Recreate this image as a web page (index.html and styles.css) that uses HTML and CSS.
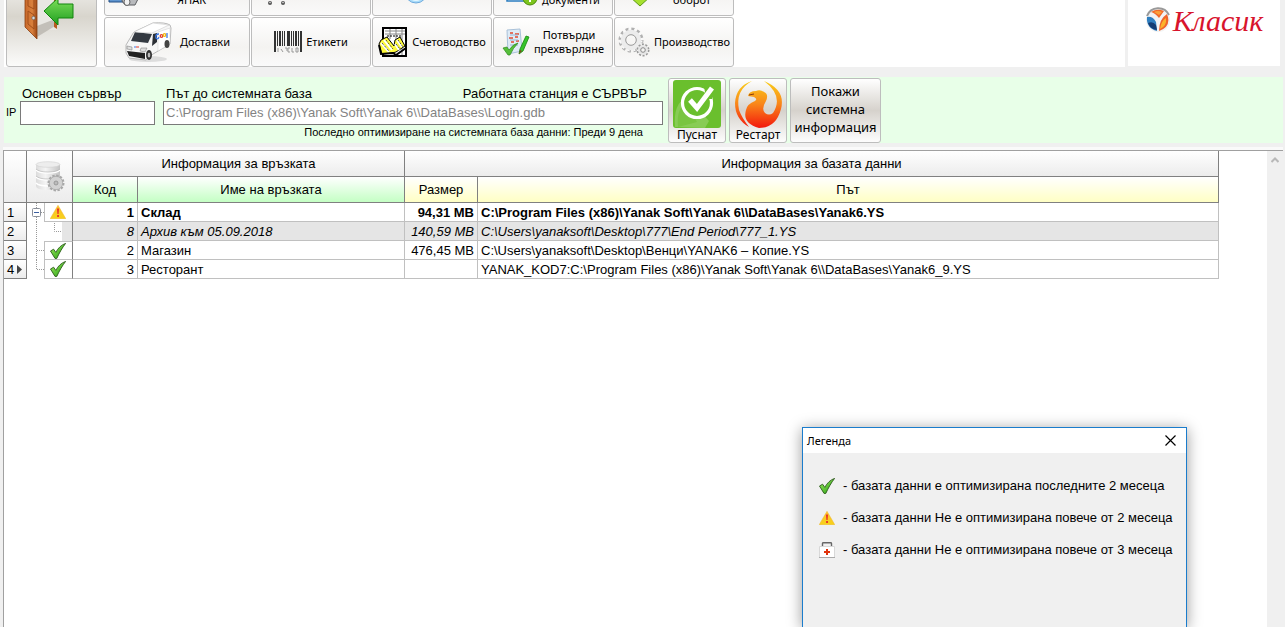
FILE: index.html
```html
<!DOCTYPE html>
<html lang="bg">
<head>
<meta charset="utf-8">
<title>Класик</title>
<link rel="stylesheet" href="styles.css">
</head>
<body>
<svg class="defs" width="0" height="0" aria-hidden="true">
  <defs>
    <linearGradient id="gGreen" x1="0" y1="0" x2="1" y2="1"><stop offset="0" stop-color="#a4f060"/><stop offset="1" stop-color="#1f9a10"/></linearGradient>
    <linearGradient id="gArrow" x1="0" y1="0" x2="0" y2="1"><stop offset="0" stop-color="#7ddf5a"/><stop offset="1" stop-color="#1f9e1f"/></linearGradient>
    <linearGradient id="gWood" x1="0" y1="0" x2="1" y2="0"><stop offset="0" stop-color="#c8682a"/><stop offset=".6" stop-color="#d9803c"/><stop offset="1" stop-color="#9c4614"/></linearGradient>
    <linearGradient id="gFire" x1="0" y1="0" x2="0" y2="48" gradientUnits="userSpaceOnUse"><stop offset="0" stop-color="#f9d21a"/><stop offset=".5" stop-color="#f9861a"/><stop offset="1" stop-color="#f3170c"/></linearGradient>
    <linearGradient id="gWarn" x1="0" y1="0" x2="0" y2="1"><stop offset="0" stop-color="#ffbf2a"/><stop offset="1" stop-color="#f6d21a"/></linearGradient>
    <linearGradient id="gDisk" x1="0" y1="0" x2="1" y2="0"><stop offset="0" stop-color="#dcdcdc"/><stop offset=".4" stop-color="#f4f4f4"/><stop offset="1" stop-color="#c4c4c4"/></linearGradient>
    <symbol id="check" viewBox="0 0 16 16"><path d="M.5 8 3.600 6.200l2.200 3.200C8 5 11.500 1.800 15.600.4 12.200 4.800 9.500 9.500 6.800 15.400H5Z" fill="url(#gGreen)" stroke="#2c5a1c" stroke-width=".9" stroke-linejoin="round"/></symbol>
    <symbol id="warn" viewBox="0 0 16 14"><path d="M8 .3 15.800 13.700H.2Z" fill="url(#gWarn)" stroke="#eeb42a" stroke-width=".5" stroke-linejoin="round"/><path d="M6.900 3.500h2.200l-.5 5.500H7.400Z" fill="#e8382a"/><rect x="7.100" y="10" width="1.900" height="2" fill="#e8382a"/></symbol>
  </defs>
</svg>

<header class="top">
  <nav class="toolbar">
    <button class="tool exit" aria-label="Изход">
      <svg width="54" height="62" viewBox="12 0 54 62"><path d="M16 4h31v42H16z" fill="#e9e7e3"/><path d="M27 53V42l18-7v7Z" fill="#b9b5ae" opacity=".8"/><path d="M44 4h3v41l-3-2z" fill="#b85a20"/><path d="M15 0 27 6v49L15 43Z" fill="url(#gWood)" stroke="#8a3f10" stroke-width=".8"/><path d="M18 8l6 3v14l-6-3zM18 27l6 4v14l-6-5z" fill="none" stroke="#a24e1a"/><circle cx="23.500" cy="34" r="1.700" fill="#d9d9d9" stroke="#555" stroke-width=".6"/><path d="M34 27 48 14v6h15v14H48v7Z" fill="url(#gArrow)" stroke="#12850f"/></svg>
    </button>
    <div class="tools">
      <button class="tool upper print"><svg width="32" height="22" viewBox="0 0 32 22"><path d="M2 8h18v9H2z" fill="#5f95cf" stroke="#234f86"/><path d="M4 13h14v2H4z" fill="#bcd7f0"/><path d="M16 10h12l3 4-3 6H18l-3-4z" fill="#b8babd" stroke="#5b5d60"/><ellipse cx="20" cy="17" rx="3" ry="3.500" fill="#f2f2f2" stroke="#666"/></svg><span>ЯНАК</span></button>
      <button class="tool upper cart" aria-label="Продажби"><svg width="26" height="22" viewBox="0 0 26 22"><path d="M1 1h4l3 11h13" fill="none" stroke="#555" stroke-width="2"/><circle cx="6" cy="18" r="2" fill="#555"/><circle cx="19" cy="18" r="2" fill="#555"/><circle cx="6" cy="17.500" r=".8" fill="#ddd"/><circle cx="19" cy="17.500" r=".8" fill="#ddd"/></svg></button>
      <button class="tool upper globe" aria-label="Справки"><svg width="24" height="24" viewBox="0 0 24 24"><circle cx="12" cy="12" r="11" fill="#a9dcfa" stroke="#6da9dc"/><ellipse cx="12" cy="17" rx="6" ry="4" fill="#e6f8ff"/></svg></button>
      <button class="tool upper"><svg width="32" height="28" viewBox="0 0 32 28"><path d="M1 4h26v18H1z" fill="#fff" stroke="#2a7cc0" stroke-width="1.500"/><circle cx="24" cy="19" r="7" fill="#7cc41c" stroke="#4a8a0c"/><path d="M24 15v8M20 19h8" stroke="#fff" stroke-width="2"/></svg><span>документи</span></button>
      <button class="tool upper turnover"><svg width="26" height="26" viewBox="0 0 26 26"><path d="M7 4h12v11h5L13 25 2 15h5z" fill="#a6e02e" stroke="#5c9a12"/></svg><span>оборот</span></button>

      <button class="tool"><svg width="48" height="42" viewBox="0 0 48 42"><ellipse cx="24" cy="38" rx="19" ry="3" fill="#ddd"/><path d="M2 24 8 14q1-3 4-4L29 2q12-1 17 2l1 3-1 16-17 10-7 6-17-2-3-5Z" fill="#f6f6f6" stroke="#a9a9a9" stroke-width=".8"/><path d="M7 20 11 11l17 2-4 9Z" fill="#343a42"/><path d="M29 13l4-1v9l-5 4z" fill="#2c3036"/><path d="M34 11 46 7v16l-12 7z" fill="#fff" stroke="#ccc" stroke-width=".5"/><path d="M10 11 29 2l16 2-17 8Z" fill="#fff" stroke="#c5c5c5" stroke-width=".5"/><path d="M3 30l18 2v6L5 35z" fill="#222"/><path d="M3 25l5 1v3l-5-1zM17 27l6 0-2 4-5-1z" fill="#ddd" stroke="#777" stroke-width=".5"/><ellipse cx="25" cy="34" rx="3" ry="5" fill="#333"/><ellipse cx="25" cy="34" rx="1.300" ry="2.500" fill="#bbb"/><ellipse cx="43" cy="23" rx="2.500" ry="4" fill="#444"/><g fill="none" stroke-width="1.300"><path d="M35 13q-4 0-3 4 2 2 3-1" stroke="#3b78e7"/><circle cx="37.500" cy="15" r="1.300" stroke="#e0392c"/><circle cx="40.500" cy="14" r="1.300" stroke="#f3b90f"/><path d="M43 12v5" stroke="#3b78e7"/></g><path d="M10 26h2" stroke="#3b78e7"/><path d="M12 26h3" stroke="#e0392c"/></svg><span>Доставки</span></button>
      <button class="tool"><svg width="28" height="22" viewBox="0 0 28 22" fill="#333"><path d="M0 0h2v21H0zM3 0h1v15H3zM5 0h2v15H5zM8 0h1v15H8zM10 0h1v15h-1zM13 0h3v15h-3zM17 0h1v15h-1zM19 0h1v15h-1zM21 0h2v15h-2zM24 0h1v15h-1zM26 0h2v21h-2z"/><path d="M4 17v4M7 18l2 3M11 17h2v3M16 17h-2v4h2M18 17v4h2M22 17h2v4h-2z" fill="none" stroke="#999"/></svg><span>Етикети</span></button>
      <button class="tool"><svg width="30" height="30" viewBox="0 0 30 30"><path d="M5 1h23v28H5z" fill="#fff" stroke="#000" stroke-width="2"/><path d="M7 4h20M7 7h20M12 2v10M18 2v10M24 2v26" stroke="#888"/><path d="M9 9h14" stroke="#000" stroke-dasharray="2 1"/><path d="M1 17 3 13 9 10l7 9 1-6 5-3 5 9-9 6-4 1-10 1z" fill="#fffb3a" stroke="#000"/><path d="M3 16l8 9M6 13l8 10M19 13l5 7M17 17l4 6" stroke="#fff" stroke-width="2"/><path d="M4 16l7 8M8 13l7 9M20 13l5 7M18 17l4 5" stroke="#222" stroke-dasharray="1 1"/><path d="M1 18l2 9 12-1 3 2 10-7" fill="none" stroke="#000" stroke-width="2"/></svg><span>Счетоводство</span></button>
      <button class="tool"><svg width="28" height="28" viewBox="0 0 28 28"><path d="M5 2 18 1l2 22-14 3z" fill="#dfebf6" stroke="#a9c1d9"/><path d="M8 5l3 0M13 6h4M7 10h4M13 9h3M9 14h3M14 13h3" stroke="#e24a30" stroke-width="1.500"/><path d="M8 7h8M8 12h8M8 17h8" stroke="#94b4d4"/><path d="M1 20l4-1 2 3q4-6 9-7-5 5-8 12H6z" fill="#56bf3a" stroke="#2c8a1c" stroke-width=".7"/><path d="M17 26l1-5 6-13 3 1-6 14z" fill="#35c42a" stroke="#16860f" stroke-width=".8"/><path d="M17 26l1-4 2 1z" fill="#7a4a1a"/></svg><span>Потвърди<br>прехвърляне</span></button>
      <button class="tool"><svg width="32" height="30" viewBox="0 0 32 30" fill="none"><circle cx="13" cy="13" r="11" stroke="#b0b0b0" stroke-width="3" stroke-dasharray="3.100 2.660"/><circle cx="13" cy="13" r="10.500" stroke="#fafafa" stroke-width="2" stroke-dasharray="2.100 3.660" stroke-dashoffset="-.5"/><circle cx="13" cy="13" r="7.700" stroke="#ececec" stroke-width="5"/><circle cx="13" cy="13" r="5.300" stroke="#999"/><circle cx="25" cy="23" r="5.500" stroke="#999" stroke-width="2" stroke-dasharray="2 1.450"/><circle cx="25" cy="23" r="3.700" stroke="#e6e6e6" stroke-width="2.500"/><circle cx="25" cy="23" r="2.300" stroke="#888"/></svg><span>Производство</span></button>
    </div>
  </nav>
  <div class="brand">
    <svg width="26" height="26" viewBox="0 0 26 26"><circle cx="13" cy="13" r="12" fill="#f3f3f3"/><path d="M2 9A12 12 0 0 1 24 8" fill="none" stroke="#999" stroke-width="2"/><path d="M6 5q6-4 13-1l-5 7q-4-5-8-6z" fill="#f26a2a"/><path d="M2 10q6-1 9 5l1 9Q1 21 2 10z" fill="#2f7fc0"/><path d="M3 16q5-2 8 2l1 5Q5 22 3 16z" fill="#133c73"/><path d="M22 7q5 12-8 17 0-12 8-17z" fill="#f0642a"/><path d="M21 11q1 8-6 11 1-8 6-11z" fill="#fbb32a"/><path d="M9 5q4-2 8 0l-3 3z" fill="#fba03a"/></svg>
    <span>Класик</span>
  </div>
</header>

<section class="server">
  <label class="ip" for="host">IP</label>
  <div class="field host">
    <label for="host">Основен сървър</label>
    <input id="host" type="text">
  </div>
  <div class="field path">
    <div class="labels"><label for="path">Път до системната база</label><span>Работната станция е СЪРВЪР</span></div>
    <input id="path" type="text" value="C:\Program Files (x86)\Yanak Soft\Yanak 6\\DataBases\Login.gdb" disabled>
    <p>Последно оптимизиране на системната база данни: Преди 9 дена</p>
  </div>
  <div class="actions">
    <button class="action"><svg width="48" height="48" viewBox="0 0 48 48"><rect width="48" height="48" rx="3" fill="#6abf2d"/><path d="M2 47q-2-24 12-30l22 24-4 7z" fill="#88cc55"/><path d="M5 47q-2-20 9-23l10 18z" fill="#79c541"/><circle cx="24" cy="23" r="14.500" fill="#6abf2d" stroke="#fff" stroke-width="3.200"/><path d="M31 6h8v13h-6z" fill="#6abf2d"/><path d="M17 20l7 8L39 8" fill="none" stroke="#fff" stroke-width="5"/></svg><span>Пуснат</span></button>
    <button class="action"><svg width="48" height="48" viewBox="0 0 48 48"><path d="M18 1Q2 6 1 23q0 16 14 24Q8 38 5 30 1 10 18 1z" fill="url(#gFire)"/><path d="M30 1Q52 10 47 29 42 48 25 48 8 43 12 30q1-6 9-9 3-2-1-4l-6-1q1-5 8-5 4-2 8 1 5 2 2 9-5 8-1 12 4 3 8 0Q50 16 30 1z" fill="url(#gFire)"/><path d="M15 15l5-1" stroke="#8a3a0c"/></svg><span>Рестарт</span></button>
    <button class="action info">Покажи системна информация</button>
  </div>
</section>

<main class="sheet">
  <div class="scroll">
    <table class="grid">
      <colgroup><col class="c-num"><col class="c-tree"><col class="c-state"><col class="c-code"><col class="c-name"><col class="c-size"><col></colgroup>
      <thead>
        <tr>
          <th rowspan="2" aria-label="Ред"></th>
          <th rowspan="2" colspan="2" aria-label="Състояние"><svg width="30" height="32" viewBox="0 0 30 32"><path d="M1 3v22q0 4 12 4t12-4V3z" fill="url(#gDisk)"/><ellipse cx="13" cy="3.500" rx="12" ry="2.800" fill="#ededed" stroke="#d0d0d0" stroke-width=".6"/><path d="M1 9q3 3 12 3t12-3M1 16q3 3 12 3t12-3M1 22q3 3 12 3" fill="none" stroke="#fff" stroke-width="1.500"/><path d="M1 8q3 3 12 3t12-3M1 15q3 3 12 3t12-3" fill="none" stroke="#b0b0b0" stroke-width=".6"/><circle cx="21" cy="22" r="7.500" fill="none" stroke="#a8a8a8" stroke-width="2" stroke-dasharray="2.400 1.520"/><circle cx="21" cy="22" r="6.700" fill="#d2d2d2" stroke="#a0a0a0" stroke-width=".7"/><circle cx="21" cy="22" r="2" fill="#bbb" stroke="#888" stroke-width=".7"/></svg></th>
          <th colspan="2">Информация за връзката</th>
          <th colspan="2">Информация за базата данни</th>
        </tr>
        <tr class="sub">
          <th class="green">Код</th><th class="green">Име на връзката</th>
          <th class="yellow">Размер</th><th class="yellow">Път</th>
        </tr>
      </thead>
      <tbody>
        <tr class="main-row">
          <th>1</th>
          <td class="tree"><svg width="17" height="19" viewBox="0 0 17 19" fill="none"><path d="M9.500 0v19M14 9.500h3" stroke="#999" stroke-dasharray="1 1"/><rect x="5.500" y="5.500" width="8" height="8" rx="1" fill="#fff" stroke="#8a8f99"/><path d="M7 9.500h5" stroke="#3b5fa0"/></svg></td>
          <td class="state"><svg width="16" height="14"><use href="#warn"/></svg></td>
          <td class="num">1</td><td>Склад</td><td class="num">94,31 MB</td><td>C:\Program Files (x86)\Yanak Soft\Yanak 6\\DataBases\Yanak6.YS</td>
        </tr>
        <tr class="archive">
          <th>2</th>
          <td class="tree"><svg width="17" height="19" viewBox="0 0 17 19"><path d="M9.500 0v19" stroke="#999" stroke-dasharray="1 1"/></svg></td>
          <td class="branch"><svg width="18" height="19" viewBox="0 0 18 19" fill="none"><path d="M10.500 1v8.500H18" stroke="#999" stroke-dasharray="1 1"/></svg></td>
          <td class="num">8</td><td>Архив към 05.09.2018</td><td class="num">140,59 MB</td><td>C:\Users\yanaksoft\Desktop\777\End Period\777_1.YS</td>
        </tr>
        <tr>
          <th>3</th>
          <td class="tree"><svg width="17" height="19" viewBox="0 0 17 19"><path d="M9.500 0v19M10 9.500h7" stroke="#999" stroke-dasharray="1 1"/></svg></td>
          <td class="state first"><svg width="16" height="16"><use href="#check"/></svg></td>
          <td class="num">2</td><td>Магазин</td><td class="num">476,45 MB</td><td>C:\Users\yanaksoft\Desktop\Венци\YANAK6 – Копие.YS</td>
        </tr>
        <tr>
          <th>4<svg class="cursor" width="5" height="9" viewBox="0 0 5 9"><path d="M0 0l5 4.500L0 9z" fill="#444"/></svg></th>
          <td class="tree"><svg width="17" height="19" viewBox="0 0 17 19" fill="none"><path d="M9.500 0v9.500H17" stroke="#999" stroke-dasharray="1 1"/></svg></td>
          <td class="state"><svg width="16" height="16"><use href="#check"/></svg></td>
          <td class="num">3</td><td>Ресторант</td><td></td><td>YANAK_KOD7:C:\Program Files (x86)\Yanak Soft\Yanak 6\\DataBases\Yanak6_9.YS</td>
        </tr>
      </tbody>
    </table>
  </div>
  <div class="bar"><svg width="8" height="6" viewBox="0 0 8 6"><path d="M.5 5 4 1.500 7.500 5" fill="none" stroke="#b8b8b8" stroke-width="2"/></svg></div>
</main>

<aside class="legend" role="dialog" aria-labelledby="legend-title">
  <header>
    <h2 id="legend-title">Легенда</h2>
    <button aria-label="Затвори"><svg width="11" height="11" viewBox="0 0 11 11"><path d="M.5.5l10 10M10.500.5l-10 10" stroke="#000" stroke-width="1.200"/></svg></button>
  </header>
  <ul>
    <li><svg width="16" height="16"><use href="#check"/></svg>- базата данни е оптимизирана последните 2 месеца</li>
    <li><svg width="16" height="14"><use href="#warn"/></svg>- базата данни Не е оптимизирана повече от 2 месеца</li>
    <li><svg width="16" height="16" viewBox="0 0 16 16"><path d="M3.500 4V1.500q0-.7 1-.7h7q1 0 1 .7V4" fill="none" stroke="#666" stroke-width="1.400"/><path d="M.5 4.500h15v11H.5z" fill="#fff" stroke="#d8d8d8"/><path d="M0 15.500h16" stroke="#aaa"/><path d="M7 7h2v2h2v2H9v2H7v-2H5V9h2z" fill="#e0330c"/></svg>- базата данни Не е оптимизирана повече от 3 месеца</li>
  </ul>
</aside>
</body>
</html>
```
FILE: styles.css
```css
* { box-sizing: border-box; }
body {
  margin: 0;
  height: 100vh;
  overflow: hidden;
  display: flex;
  flex-direction: column;
  position: relative;
  background: #f0f0f0;
  color: #000;
  font: 13px/16px "Liberation Sans", Arial, sans-serif;
}
svg { display: block; flex: none; }
.defs { position: absolute; }
button {
  font: 11px/14px "Noto Sans", "Open Sans", sans-serif;
  color: #000;
  padding: 0;
}
input { font: inherit; }

.top {
  display: flex;
  gap: 3px;
  height: 67px;
  flex: none;
  padding: 0 5px 0 4px;
  overflow: hidden;
}
.toolbar {
  flex: 1;
  display: flex;
  align-items: flex-end;
  gap: 7px;
  padding-left: 2px;
  background: #fff;
}
.tools {
  display: grid;
  grid-template-columns: 146px repeat(4, 120px);
  grid-auto-rows: 50px;
  gap: 1px;
}
.tool {
  display: flex;
  align-items: center;
  justify-content: center;
  gap: 4px;
  border: 1px solid #bdbdbd;
  border-radius: 3px;
  background: linear-gradient(#fff, #f4f3f1 60%, #fafafa);
}
.tool:nth-child(6) { gap: 8px; }
.tool.exit {
  width: 91px;
  height: 101px;
  padding: 0 5px 3px 0;
  background: linear-gradient(#fff, #d8d5cd 50%, #fbfbfa);
}
.tool.upper {
  align-items: flex-end;
  padding-bottom: 8px;
}
.tool.print { justify-content: flex-start; gap: 38px; padding-left: 2px; }
.tool.cart { justify-content: flex-start; padding-left: 12px; }
.tool.globe { padding-right: 32px; padding-bottom: 11px; }
.tool.turnover { gap: 20px; padding-right: 10px; }
.brand {
  width: 152px;
  height: 66px;
  display: flex;
  justify-content: center;
  gap: 2px;
  padding-top: 7px;
  background: #fff;
  color: #d8142c;
  font: italic 30px/28px "Liberation Serif", serif;
}

.server {
  display: flex;
  flex: none;
  height: 66px;
  margin: 10px 2px 0 4px;
  padding: 1px 0 0 2px;
  background: #e8ffe8;
}
.ip {
  width: 14px;
  padding-top: 26px;
  font-size: 11px;
}
.field {
  display: flex;
  flex-direction: column;
  padding-top: 8px;
  margin-right: 8px;
  line-height: 15px;
}
.field.host { width: 135px; }
.field.path { width: 500px; margin-right: 5px; }
.field > label { padding-left: 2px; }
.labels {
  display: flex;
  justify-content: space-between;
  padding: 0 16px 0 3px;
}
.field input {
  width: 100%;
  height: 24px;
  padding: 0 2px 2px;
  border: 1px solid #7a7a7a;
  background: #fff;
}
.field input:disabled { color: #838383; }
.field p {
  margin: 0 20px 0 0;
  text-align: right;
  font-size: 11px;
  line-height: 14px;
}
.actions { display: flex; gap: 3px; }
.action {
  display: flex;
  flex-direction: column;
  align-items: center;
  width: 58px;
  height: 65px;
  border: 1px solid #bdbdbd;
  border-radius: 3px;
  background: linear-gradient(#fff, #d6d2cc 50%, #fdfdfd);
  font-size: 12px;
  line-height: 13px;
  padding-top: 1px;
}
.action.info {
  width: 91px;
  font-size: 13px;
  line-height: 18px;
  justify-content: center;
  padding: 0 2px 4px;
}

.sheet {
  flex: 1;
  min-height: 0;
  display: flex;
  margin: 7px 2px 0 3px;
  border-top: 1px solid #a0a0a0;
  border-left: 1px solid #a0a0a0;
  background: #fff;
  box-shadow: 0 -3px 0 #fafafa;
}
.scroll { flex: 1; padding-right: 48px; }
.bar {
  width: 16px;
  background: #f0f0f0;
  display: flex;
  justify-content: center;
  padding-top: 6px;
}
.grid {
  width: 100%;
  table-layout: fixed;
  border-collapse: separate;
  border-spacing: 0;
}
.c-num { width: 23px; }
.c-tree { width: 17px; }
.c-state { width: 29px; }
.c-code { width: 65px; }
.c-name { width: 267px; }
.c-size { width: 73px; }
.grid th {
  padding: 0;
  font-weight: normal;
  border-right: 1px solid #808080;
  border-bottom: 1px solid #808080;
  background: linear-gradient(#fff, #ececec);
}
.grid thead th { height: 26px; }
.grid thead svg { margin: 0 auto; }
.grid th.green { background: linear-gradient(#fff, #c4ffc4); }
.grid th.yellow { background: linear-gradient(#fff, #ffffc4); }
.grid td, .grid tbody th {
  height: 19px;
  padding: 1px 3px 0;
  line-height: 17px;
  white-space: nowrap;
}
.grid td {
  border-right: 1px solid #c0c0c0;
  border-bottom: 1px solid #c0c0c0;
}
.grid tbody th { text-align: left; }
.grid .cursor { display: inline-block; margin-left: 3px; }
.grid td.num { text-align: right; }
.grid td.tree, .grid td.branch {
  padding: 0;
  border: 0;
  background: #fff;
}
.grid td.state {
  padding: 0 5px;
  border-left: 1px solid #c0c0c0;
  border-right-color: #808080;
}
.grid td.first {
  border-top: 1px solid #c0c0c0;
}
.grid td.branch {
  background: linear-gradient(90deg, #fff 18px, #e5e5e5 18px);
  border-right: 1px solid #808080;
}
.main-row td { font-weight: bold; }
.archive td { font-style: italic; background: #e5e5e5; }

.legend {
  position: absolute;
  top: 427px;
  right: 98px;
  bottom: 0;
  width: 385px;
  border: 1px solid #1a7ccc;
  border-bottom: 0;
  background: #f0f0f0;
  box-shadow: 0 2px 14px rgba(0, 0, 0, .4);
}
.legend header {
  display: flex;
  align-items: center;
  justify-content: space-between;
  height: 25px;
  padding: 0 10px 0 4px;
  background: #fff;
}
.legend h2 { margin: 0; font: 11px/16px "Noto Sans", "Open Sans", sans-serif; }
.legend header button { border: 0; background: none; }
.legend ul {
  list-style: none;
  margin: 0;
  padding: 17px 16px 0;
}
.legend li {
  display: flex;
  align-items: center;
  gap: 8px;
  height: 32px;
  white-space: nowrap;
}
```
